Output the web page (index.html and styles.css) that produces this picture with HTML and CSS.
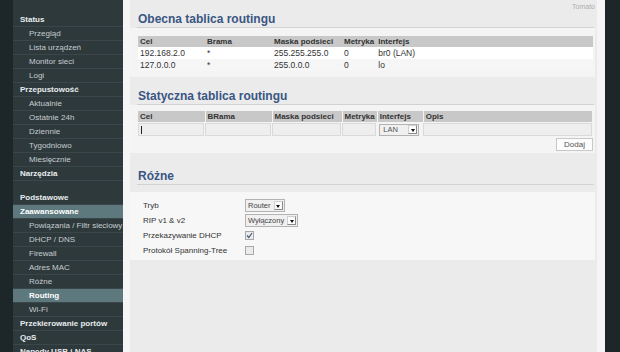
FILE: index.html
```html
<!DOCTYPE html>
<html>
  <head>
    <title>Routing</title>
    <link rel="stylesheet" href="styles.css">
  </head>
  <body>
    <div class="page">
      <nav class="menu">
        <a href="#" class="grp">Status</a>
        <a href="#">Przegląd</a>
        <a href="#">Lista urządzeń</a>
        <a href="#">Monitor sieci</a>
        <a href="#">Logi</a>
        <a href="#" class="grp">Przepustowość</a>
        <a href="#">Aktualnie</a>
        <a href="#">Ostatnie 24h</a>
        <a href="#">Dziennie</a>
        <a href="#">Tygodniowo</a>
        <a href="#">Miesięcznie</a>
        <a href="#" class="grp">Narzędzia</a>
        <div class="gap"></div>
        <a href="#" class="grp">Podstawowe</a>
        <a href="#" class="grp on">Zaawansowane</a>
        <a href="#">Powiązania / Filtr sieciowy</a>
        <a href="#">DHCP / DNS</a>
        <a href="#">Firewall</a>
        <a href="#">Adres MAC</a>
        <a href="#">Różne</a>
        <a href="#" class="on">Routing</a>
        <a href="#">Wi-Fi</a>
        <a href="#" class="grp">Przekierowanie portów</a>
        <a href="#" class="grp">QoS</a>
        <a href="#" class="grp">Napędy USB i NAS</a>
      </nav>

      <main class="main">
        <div class="brand">Tomato</div>

        <!-- obecna tablica -->
        <h2>Obecna tablica routingu</h2>
        <div class="box">
          <table class="grid">
            <colgroup>
              <col class="c-cel"><col class="c-brama"><col class="c-maska"><col class="c-metr"><col>
            </colgroup>
            <tr><th>Cel</th><th>Brama</th><th>Maska podsieci</th><th>Metryka</th><th>Interfejs</th></tr>
            <tr><td>192.168.2.0</td><td>*</td><td>255.255.255.0</td><td>0</td><td>br0 (LAN)</td></tr>
            <tr class="alt"><td>127.0.0.0</td><td>*</td><td>255.0.0.0</td><td>0</td><td>lo</td></tr>
          </table>
        </div>

        <!-- statyczna tablica -->
        <h2 class="h-static">Statyczna tablica routingu</h2>
        <div class="box box-static">
          <table class="grid edit">
            <colgroup>
              <col class="c-cel"><col class="c-brama"><col class="c-maska"><col class="c-metr"><col class="c-if"><col>
            </colgroup>
            <tr><th>Cel</th><th>BRama</th><th>Maska podsieci</th><th>Metryka</th><th>Interfejs</th><th>Opis</th></tr>
            <tr class="inputs">
              <td><div class="field"><span class="caret"></span></div></td>
              <td><div class="field"></div></td>
              <td><div class="field"></div></td>
              <td><div class="field"></div></td>
              <td class="sel-cell"><div class="sel sel-lan">LAN<span class="arr"></span></div></td>
              <td><div class="field"></div></td>
            </tr>
          </table>
          <div class="actions"><button type="button" class="btn">Dodaj</button></div>
        </div>

        <!-- różne -->
        <h2 class="h-misc">Różne</h2>
        <div class="box box-misc">
          <div class="row"><span class="lbl">Tryb</span><div class="sel">Router<span class="arr"></span></div></div>
          <div class="row"><span class="lbl">RIP v1 &amp; v2</span><div class="sel">Wyłączony<span class="arr"></span></div></div>
          <div class="row">
            <span class="lbl">Przekazywanie DHCP</span>
            <span class="chk"><svg width="7" height="7" viewBox="0 0 7 7"><path d="M1 3.5 L2.8 5.5 L6 1" fill="none" stroke="#4b5a7d" stroke-width="1.2"/></svg></span>
          </div>
          <div class="row"><span class="lbl">Protokół Spanning-Tree</span><span class="chk"></span></div>
        </div>
      </main>
    </div>
  </body>
</html>
```

FILE: styles.css
```css
* {
  box-sizing: border-box;
}
body {
  margin: 0;
  background: #1d2629;
  font-family: "Liberation Sans", Arial, sans-serif;
}
.page {
  display: flex;
  height: 352px;
  overflow: hidden;
  padding-left: 13px;
}

/* menu */
.menu {
  width: 110px;
  flex-shrink: 0;
  background: #2e393c;
  padding-top: 13px;
}
.menu a {
  display: block;
  height: 14px;
  line-height: 13px;
  border-bottom: 1px solid #3a4649;
  padding-left: 16px;
  font-size: 8px;
  color: #c6cdd0;
  text-decoration: none;
  white-space: nowrap;
}
.menu a.grp {
  padding-left: 7px;
  font-weight: bold;
  color: #e8ecee;
}
.menu a.on {
  background: #5e797e;
  color: #fff;
  font-weight: bold;
}
.menu .gap {
  height: 10px;
}

/* main */
.main {
  width: 482px;
  flex-shrink: 0;
  background: #ebebeb;
  border-left: 7px solid #f5f5f5;
  border-right: 8px solid #f5f5f5;
  padding-top: 2px;
}
.brand {
  height: 9px;
  line-height: 9px;
  text-align: right;
  padding-right: 2px;
  font-size: 7px;
  color: #adadad;
}
h2 {
  margin: 0 3px 0 7px;
  padding-left: 1px;
  font-size: 12px;
  line-height: 16px;
  color: #3a5683;
  border-bottom: 1px solid #d2d2d2;
}
.h-static {
  margin-top: 11px;
}
.h-misc {
  margin-top: 15px;
}
.box {
  margin-right: 2px;
  background: #f4f4f4;
  padding: 8px 2px 6px 8px;
}
.box-static {
  padding-top: 6px;
  padding-bottom: 2px;
}
.box-misc {
  margin-top: 7px;
  padding: 6px 0 2px 13px;
  background: #f7f7f7;
}

/* tables */
.grid {
  width: 100%;
  border-collapse: collapse;
  font-size: 8.5px;
  color: #333;
}
.c-cel { width: 67px; }
.c-brama { width: 67px; }
.c-maska { width: 70px; }
.c-metr { width: 30px; }
.c-if { width: 46px; }
.grid th {
  height: 11px;
  line-height: 11px;
  padding: 0 2px;
  background: #c8c8c8;
  text-align: left;
  font-size: 8px;
  font-weight: bold;
  color: #333;
}
.grid td {
  height: 12px;
  line-height: 12px;
  padding: 0 2px;
  background: #fff;
}
.grid tr.alt td {
  background: #f6f6f6;
}
.edit th {
  border-right: 1px solid #f4f4f4;
}
.edit .inputs td {
  height: 14px;
  padding: 1px 1px 0 0;
  background: #f4f4f4;
}
.field {
  height: 13px;
  border: 1px solid #dadada;
  background: #eeeeee;
  padding: 2px 0 0 2px;
}
.caret {
  display: block;
  width: 1px;
  height: 8px;
  background: #222;
}
.edit .inputs td.sel-cell {
  padding: 1px 0 0 2px;
}

/* selects */
.sel {
  display: inline-flex;
  align-items: center;
  gap: 3px;
  height: 13px;
  border: 1px solid #b3b3b3;
  background: #f0f0f0;
  padding: 0 1px 0 2px;
  font-size: 7.5px;
  color: #444;
}
.sel-lan {
  display: flex;
  justify-content: space-between;
  width: 40px;
  height: 12px;
  padding-left: 3px;
  color: #555;
}
.arr {
  position: relative;
  width: 9px;
  height: 9px;
  background: #fbfbfb;
  border: 1px solid #d0d0d0;
  border-right-color: #8a8a8a;
  border-bottom-color: #8a8a8a;
}
.arr::after {
  content: "";
  position: absolute;
  left: 1.5px;
  top: 2.5px;
  border-left: 2.5px solid transparent;
  border-right: 2.5px solid transparent;
  border-top: 3px solid #111;
}

.actions {
  display: flex;
  justify-content: flex-end;
  margin-top: 2px;
}
.btn {
  width: 37px;
  height: 13px;
  padding: 0;
  border: 1px solid #c8c8c8;
  background: #fcfcfc;
  font-family: inherit;
  font-size: 8px;
  color: #555;
}

/* rozne */
.row {
  display: flex;
  align-items: center;
  height: 15px;
}
.lbl {
  width: 102px;
  font-size: 8px;
  color: #333;
}
.chk {
  display: flex;
  align-items: center;
  justify-content: center;
  width: 9px;
  height: 9px;
  border: 1px solid #a8a8a8;
  background: #ebebeb;
}
```
